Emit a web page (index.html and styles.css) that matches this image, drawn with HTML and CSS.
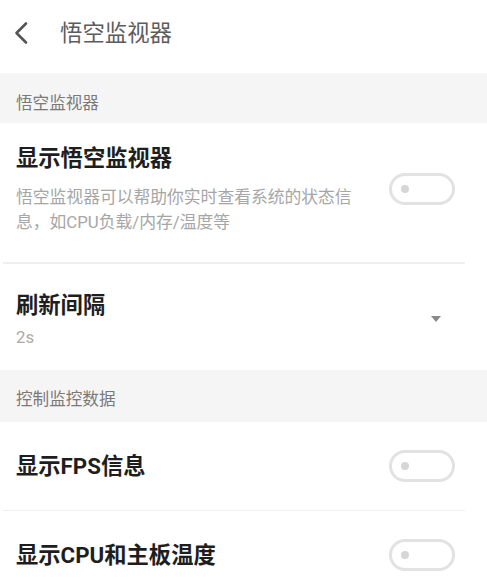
FILE: index.html
```html
<!DOCTYPE html>
<html lang="zh-CN">
<head>
<meta charset="utf-8">
<title>悟空监视器</title>
<link rel="stylesheet" href="styles.css">
</head>
<body>
<div class="page">
  <header class="topbar">
    <svg class="back" width="16" height="24" viewBox="0 0 16 24" aria-hidden="true">
      <path d="M13 2.5 L3.5 12 L13 21.5" fill="none" stroke="#555" stroke-width="2.6" stroke-linecap="round" stroke-linejoin="round"/>
    </svg>
    <h1 class="topbar-title">悟空监视器</h1>
  </header>

  <div class="section-head first">悟空监视器</div>

  <div class="item item-desc">
    <div class="item-text">
      <div class="item-title">显示悟空监视器</div>
      <div class="item-sub desc">悟空监视器可以帮助你实时查看系统的状态信息，如CPU负载/内存/温度等</div>
    </div>
    <span class="toggle"><span class="dot"></span></span>
  </div>
  <div class="divider"></div>

  <div class="item item-select">
    <div class="item-text">
      <div class="item-title">刷新间隔</div>
      <div class="item-sub value">2s</div>
    </div>
    <span class="caret"></span>
  </div>

  <div class="section-head second">控制监控数据</div>

  <div class="item item-plain">
    <div class="item-text">
      <div class="item-title">显示FPS信息</div>
    </div>
    <span class="toggle"><span class="dot"></span></span>
  </div>
  <div class="divider"></div>

  <div class="item item-plain">
    <div class="item-text">
      <div class="item-title">显示CPU和主板温度</div>
    </div>
    <span class="toggle"><span class="dot"></span></span>
  </div>
</div>
</body>
</html>
```

FILE: styles.css
```css
* { box-sizing: border-box; margin: 0; padding: 0; }

html, body {
  background: #ffffff;
}

body {
  font-family: Roboto, "Noto Sans CJK SC", "Noto Sans", sans-serif;
  width: 487px;
  height: 579px;
  overflow: hidden;
}

.page {
  display: flex;
  flex-direction: column;
}

.topbar {
  height: 73px;
  display: flex;
  align-items: center;
  padding: 0 0 0 13px;
}

.back {
  flex: none;
  margin-top: -8px;
}

.topbar-title {
  margin-left: 31px;
  font-size: 22.4px;
  font-weight: 400;
  line-height: 30px;
  color: #5c5c5c;
  margin-top: -7px;
}

.section-head {
  background: #f5f5f5;
  padding: 18.5px 16px 0;
  font-size: 16.6px;
  line-height: 24px;
  color: #7a7a7a;
}

.section-head.first { height: 50px; }
.section-head.second { height: 52px; }

.item {
  display: flex;
  align-items: center;
  padding: 0 32px 0 16px;
}

.item-text {
  flex: 1;
  min-width: 0;
}

.item-title {
  font-size: 22.3px;
  line-height: 30px;
  font-weight: 700;
  color: #1e1e1e;
}

.item-desc {
  padding-top: 20px;
  padding-bottom: 27.5px;
}

.desc {
  margin-top: 11.5px;
  max-width: 345px;
  font-size: 16.8px;
  line-height: 25px;
  color: #a6a6a6;
}

.item-select {
  padding-top: 26px;
  padding-bottom: 21px;
  padding-right: 46px;
}

.value {
  margin-top: 5px;
  font-size: 16.8px;
  line-height: 24px;
  color: #aaaaaa;
}

.item-plain {
  height: 88px;
}

.divider {
  height: 1.5px;
  background: #efefef;
  margin: 0 22px 0 3px;
}

.toggle {
  flex: none;
  width: 66px;
  height: 32px;
  border: 3px solid #e2e2e2;
  border-radius: 16px;
  display: flex;
  align-items: center;
  padding-left: 9px;
}

.dot {
  width: 8px;
  height: 8px;
  border-radius: 50%;
  background: #d6d6d6;
}

.caret {
  flex: none;
  width: 0;
  height: 0;
  border-left: 5.5px solid transparent;
  border-right: 5.5px solid transparent;
  border-top: 6px solid #8a8a8a;
}
```
